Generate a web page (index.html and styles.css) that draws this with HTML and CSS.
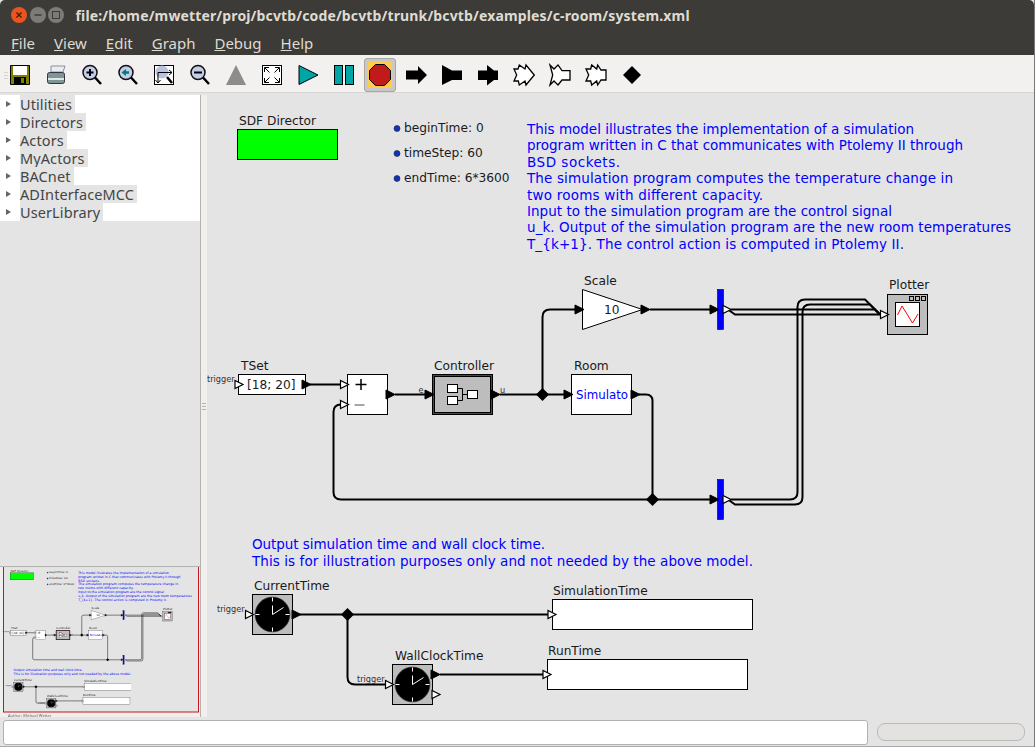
FILE: index.html
```html
<!DOCTYPE html>
<html>
<head>
  <title>system.xml</title>
  <link rel="stylesheet" href="styles.css">
</head>
<body>
<div class="window">

  <div class="titlebar">
    <span class="winbtn close"><svg width="16" height="16" viewBox="0 0 16 16"><path d="M5.5 5.5l5 5M10.5 5.5l-5 5" stroke="#4a1c0c" stroke-width="1.4"/></svg></span>
    <span class="winbtn"><svg width="16" height="16" viewBox="0 0 16 16"><path d="M4.5 8h7" stroke="#3c3b37" stroke-width="1.5"/></svg></span>
    <span class="winbtn"><svg width="16" height="16" viewBox="0 0 16 16"><rect x="4.5" y="4.5" width="7" height="7" fill="none" stroke="#3c3b37"/></svg></span>
    <span class="wintitle">file:/home/mwetter/proj/bcvtb/code/bcvtb/trunk/bcvtb/examples/c-room/system.xml</span>
  </div>

  <div class="menubar">
    <span><u>F</u>ile</span>
    <span><u>V</u>iew</span>
    <span><u>E</u>dit</span>
    <span><u>G</u>raph</span>
    <span><u>D</u>ebug</span>
    <span><u>H</u>elp</span>
  </div>

  <div class="toolbar">
    <span class="tool"><svg width="36" height="24" viewBox="0 0 36 24">
      <path d="M8.5 2.500h19v19h-19z" fill="#808000" stroke="#000"/>
      <rect x="11" y="3" width="14" height="9" fill="#fff"/>
      <rect x="12" y="14" width="12" height="7" fill="#000"/>
      <rect x="19" y="15" width="3" height="5" fill="#808000"/>
    </svg></span>
    <span class="tool"><svg width="36" height="24" viewBox="0 0 36 24">
      <path d="M13 3h14l-2 6H13z" fill="#e8eef0" stroke="#778" stroke-width=".8"/>
      <rect x="9.500" y="9.500" width="17" height="11" rx="2" fill="#7f9595" stroke="#334" stroke-width="1"/>
      <rect x="10" y="15" width="16" height="2" fill="#dfe8e8"/>
    </svg></span>
    <span class="tool"><svg width="36" height="24" viewBox="0 0 36 24">
      <use href="#lens"/><path d="M12.500 9.500h7M16 6v7" stroke="#000" stroke-width="2"/>
    </svg></span>
    <span class="tool"><svg width="36" height="24" viewBox="0 0 36 24">
      <use href="#lens"/><path d="M19 9.500h-4" stroke="#007a7a" stroke-width="2.500"/><path d="M11.500 9.500l4.500-3.500v7z" fill="#007a7a"/>
    </svg></span>
    <span class="tool"><svg width="36" height="24" viewBox="0 0 36 24">
      <rect x="8.500" y="2.500" width="19" height="19" fill="#fff" stroke="#000"/>
      <circle cx="16" cy="9" r="6.500" fill="#b9c3e0"/>
      <path d="M21 14l5 6" stroke="#000" stroke-width="2.500"/>
      <path d="M12 9.500h14M23 7l3 2.500-3 2.500M12 9.500v10M9.500 17l2.500 3 2.500-3" fill="none" stroke="#000"/>
    </svg></span>
    <span class="tool"><svg width="36" height="24" viewBox="0 0 36 24">
      <use href="#lens"/><path d="M12 9.500h8" stroke="#000" stroke-width="2"/>
    </svg></span>
    <span class="tool"><svg width="36" height="24" viewBox="0 0 36 24">
      <path d="M18 2l10 20H8z" fill="#8c8c8c"/>
    </svg></span>
    <span class="tool"><svg width="36" height="24" viewBox="0 0 36 24">
      <rect x="8.500" y="2.500" width="19" height="19" fill="#fff" stroke="#000"/>
      <path d="M11 5l4.500 4.500M25 5l-4.500 4.500M11 19l4.500-4.500M25 19l-4.500-4.500" stroke="#000"/>
      <path d="M10.500 9V4.500H15M21 4.500h4.500V9M10.500 15v4.500H15M21 19.500h4.500V15" fill="none" stroke="#000"/>
    </svg></span>
    <span class="tool"><svg width="36" height="24" viewBox="0 0 36 24">
      <path d="M9 2.500l19 9.500-19 9.500z" fill="#00a5a5" stroke="#000"/>
    </svg></span>
    <span class="tool"><svg width="36" height="24" viewBox="0 0 36 24">
      <rect x="8.500" y="2.500" width="8" height="19" fill="#00a5a5" stroke="#000"/>
      <rect x="19.500" y="2.500" width="8" height="19" fill="#00a5a5" stroke="#000"/>
    </svg></span>
    <span class="tool active"><svg width="24" height="26" viewBox="0 0 24 26">
      <rect width="24" height="26" fill="#ffcc4d"/>
      <path d="M7.500 2.500h9l6 6v9l-6 6h-9l-6-6v-9z" fill="#c01a1a" stroke="#000"/>
    </svg></span>
    <span class="tool"><svg width="36" height="24" viewBox="0 0 36 24">
      <path d="M8 7.500h12V3l9 9-9 9v-4.500H8z"/>
    </svg></span>
    <span class="tool"><svg width="36" height="24" viewBox="0 0 36 24">
      <path d="M8 2l10 5.500h10v9.500H18L8 22z"/>
    </svg></span>
    <span class="tool"><svg width="36" height="24" viewBox="0 0 36 24">
      <path d="M8 7.500h9V2l7 5.500h4v9.500h-4l-7 5.500V17H8z"/>
    </svg></span>
    <span class="tool"><svg width="36" height="24" viewBox="0 0 36 24">
      <polygon points="8,6 12,6 13.300,2 19,6 20,2 28.300,12 20,22 19,18 13.300,22 12.300,18 8,18 10.700,12" fill="#fff" stroke="#000" stroke-width="1.300"/>
    </svg></span>
    <span class="tool"><svg width="36" height="24" viewBox="0 0 36 24">
      <polygon points="8,2 12,6 16,2 20,7.700 28,7.700 28,17 20,17 16,22 12,18 8,22 10.700,12" fill="#fff" stroke="#000" stroke-width="1.300"/>
    </svg></span>
    <span class="tool"><svg width="36" height="24" viewBox="0 0 36 24">
      <polygon points="8,6 12.700,6 13.700,2 18.700,6 19.700,2 23,7 28,7 28,17 23,17 19.700,22 18.700,18 13.700,22 12.700,18 8,18 10.700,12" fill="#fff" stroke="#000" stroke-width="1.300"/>
    </svg></span>
    <span class="tool"><svg width="36" height="24" viewBox="0 0 36 24">
      <path d="M18 3l9 9-9 9-9-9z"/>
    </svg></span>
  </div>

  <div class="main">
    <div class="side">
      <ul class="tree">
        <li><span>Utilities</span></li>
        <li><span>Directors</span></li>
        <li><span>Actors</span></li>
        <li><span>MyActors</span></li>
        <li><span>BACnet</span></li>
        <li><span>ADInterfaceMCC</span></li>
        <li><span>UserLibrary</span></li>
      </ul>
      <div class="tree-rest"></div>
      <div class="preview">
        <svg width="200" height="150" viewBox="0 567 200 150">
          <rect x="3.500" y="560" width="195" height="152" fill="#e4e4e4"/>
          <g class="thumb"><use href="#diagram" transform="translate(-45.7 542.4) scale(.235)"/></g>
          <rect x="3.500" y="560" width="195" height="152" fill="none" stroke="#c8141e"/>
        </svg>
        <div class="author">Author: Michael Wetter</div>
      </div>
    </div>
    <div class="divider"><i></i></div>
    <svg class="canvas" width="826" height="622" viewBox="207 95 826 622">
      <defs>
        <g id="lens">
          <circle cx="16" cy="9.500" r="7" fill="#c3cce8" stroke="#111" stroke-width="1.500"/>
          <path d="M21 14.500l6 6.500" stroke="#000" stroke-width="2.500"/>
        </g>
        <polygon id="pb" points="0,-4.500 0,4.500 9,0" fill="#000" stroke="#000"/>
        <polygon id="pw" points="0,-4 0,4 8,0" fill="#fff" stroke="#000" stroke-width="1.200"/>
        <path id="dia" d="M0-6.500L6.500 0 0 6.500-6.500 0z" fill="#000"/>
        <g id="clock">
          <rect x="-20" y="-20" width="40" height="40" fill="#bdbdbd" stroke="#000"/>
          <circle r="17.500" fill="#000" stroke="#444" stroke-width=".6"/>
          <path d="M0-17v4M0 13v4M-17 0h4M13 0h4M0 0v-9M0 0l11-7" stroke="#fff" fill="none"/>
        </g>
      </defs>
      <g id="diagram">
        <rect x="207" y="95" width="826" height="622" fill="#e4e4e4"/>

        <!-- director and parameters -->
        <text class="lbl" x="239" y="125">SDF Director</text>
        <rect x="237.500" y="129.500" width="100" height="30" fill="#0f0" stroke="#000"/>
        <circle class="param" cx="397" cy="128.500" r="3"/>
        <text class="lbl" x="404" y="132">beginTime: 0</text>
        <circle class="param" cx="397" cy="153.500" r="3"/>
        <text class="lbl" x="404" y="157">timeStep: 60</text>
        <circle class="param" cx="397" cy="178.500" r="3"/>
        <text class="lbl" x="404" y="182">endTime: 6*3600</text>

        <!-- annotations -->
        <text class="note" x="527" y="134" textLength="387">This model illustrates the implementation of a simulation</text>
        <text class="note" x="527" y="150" textLength="436">program written in C that communicates with Ptolemy II through</text>
        <text class="note" x="527" y="167" textLength="93">BSD sockets.</text>
        <text class="note" x="527" y="183" textLength="426">The simulation program computes the temperature change in</text>
        <text class="note" x="527" y="200" textLength="236">two rooms with different capacity.</text>
        <text class="note" x="527" y="216" textLength="365">Input to the simulation program are the control signal</text>
        <text class="note" x="527" y="232" textLength="484">u_k. Output of the simulation program are the new room temperatures</text>
        <text class="note" x="527" y="249" textLength="377">T_{k+1}. The control action is computed in Ptolemy II.</text>
        <text class="note" x="252" y="549" textLength="293">Output simulation time and wall clock time.</text>
        <text class="note" x="252" y="566" textLength="501">This is for illustration purposes only and not needed by the above model.</text>

        <!-- wires -->
        <g class="wire">
          <path d="M310 384.500H341"/>
          <path d="M395 394.500H426"/>
          <path d="M500 394.500H565"/>
          <path d="M542.500 394.500V317q0-7.500 7.500-7.500H576"/>
          <path d="M650 309.500H711"/>
          <path d="M639 394.500H646q6.500 0 6.500 6.500V499.500"/>
          <path d="M652.500 499.500H341q-7.500 0-7.500-7.500V412q0-7.500 7.500-7.500"/>
          <path d="M652.500 499.500H711"/>
          <path d="M731 309.500H875L880 314.500"/>
          <path d="M728 309.500L735 314.500H880"/>
          <path d="M731 499.500H790q7.500 0 7.500-7.500V307q0-7.500 7.500-7.500H865L880 314.500"/>
          <path d="M728 499.500L735 504.500H795q7.500 0 7.500-7.500V312q0-7.500 7.500-7.500H870L880 314.500"/>
          <path d="M300 614.500H548"/>
          <path d="M347.500 614.500V677q0 7.500 7.500 7.500H386"/>
          <path d="M440 674.500H543"/>
        </g>

        <!-- TSet -->
        <text class="lbl" x="241" y="370">TSet</text>
        <rect class="box" x="238.500" y="374.500" width="67" height="20"/>
        <text class="lbl" x="247" y="389">[18; 20]</text>
        <text class="port" x="207" y="382">trigger</text>
        <use href="#pw" x="235" y="384.500"/>
        <use href="#pb" x="302" y="384.500"/>

        <!-- adder -->
        <rect class="box" x="347.500" y="374.500" width="40" height="40"/>
        <path d="M361 379v11M355.500 384.500h11" stroke="#000" stroke-width="1.500"/>
        <path d="M354.500 405h10" stroke="#888" stroke-width="1.500"/>
        <use href="#pw" x="340.500" y="384.500"/>
        <use href="#pw" x="340.500" y="404.500"/>
        <use href="#pb" x="386" y="394.500"/>

        <!-- controller -->
        <text class="lbl" x="434" y="370">Controller</text>
        <rect x="432" y="374" width="61" height="41" fill="#000"/>
        <rect x="433.500" y="375.500" width="58" height="38" fill="none" stroke="#d01010"/>
        <rect x="434.500" y="376.500" width="56" height="36" fill="#bdbdbd" stroke="#000"/>
        <path d="M457.500 388.500h5v12h-5M462.500 394.500h5" fill="none" stroke="#000"/>
        <rect class="box" x="447.500" y="384.500" width="10" height="8"/>
        <rect class="box" x="447.500" y="396.500" width="10" height="8"/>
        <rect class="box" x="467.500" y="390.500" width="10" height="8"/>
        <text class="port" x="418.500" y="393">e</text>
        <text class="port" x="500" y="393">u</text>
        <use href="#pb" x="425" y="394.500"/>
        <use href="#pb" x="491" y="394.500"/>
        <use href="#dia" x="542.500" y="394.500"/>

        <!-- scale -->
        <text class="lbl" x="584" y="285">Scale</text>
        <path class="box" d="M582.500 289.500l60 20-60 20z"/>
        <text class="lbl" x="604" y="314">10</text>
        <use href="#pb" x="575" y="309.500"/>
        <use href="#pb" x="641" y="309.500"/>

        <!-- room -->
        <text class="lbl" x="574" y="370">Room</text>
        <rect class="box" x="571.500" y="374.500" width="60" height="40"/>
        <text class="lbl sim" x="576" y="399">Simulato</text>
        <use href="#pb" x="564" y="394.500"/>
        <use href="#pb" x="631" y="394.500"/>
        <use href="#dia" x="652.500" y="499.500"/>

        <!-- sample delay bars -->
        <rect x="717.500" y="289.500" width="6" height="40" fill="#00f" stroke="#000" stroke-width=".6"/>
        <use href="#pb" x="710" y="309.500"/>
        <use href="#pw" x="723" y="309.500"/>
        <rect x="717.500" y="479.500" width="6" height="40" fill="#00f" stroke="#000" stroke-width=".6"/>
        <use href="#pb" x="710" y="499.500"/>
        <use href="#pw" x="723" y="499.500"/>

        <!-- plotter -->
        <text class="lbl" x="889" y="289">Plotter</text>
        <rect x="887.500" y="294.500" width="40" height="40" fill="#bdbdbd" stroke="#000"/>
        <rect class="box" x="895.500" y="302.500" width="24" height="24"/>
        <rect x="909.500" y="296.500" width="4" height="4" fill="none" stroke="#000"/>
        <rect x="915.500" y="296.500" width="4" height="4" fill="none" stroke="#000"/>
        <rect x="921.500" y="296.500" width="4" height="4" fill="none" stroke="#000"/>
        <path d="M897.500 315L902 306l10.500 17 5.500-9" fill="none" stroke="#f00"/>
        <use href="#pw" x="880.500" y="314.500"/>

        <!-- current time -->
        <text class="lbl" x="254" y="590">CurrentTime</text>
        <use href="#clock" x="272.500" y="614.500"/>
        <text class="port" x="217" y="612">trigger</text>
        <use href="#pw" x="245.500" y="614.500"/>
        <use href="#pb" x="292" y="614.500"/>
        <use href="#dia" x="347.500" y="614.500"/>

        <!-- wall clock time -->
        <text class="lbl" x="395" y="660">WallClockTime</text>
        <use href="#clock" x="412.500" y="684.500"/>
        <text class="port" x="357" y="682">trigger</text>
        <use href="#pw" x="385.500" y="684.500"/>
        <use href="#pb" x="431" y="674.500"/>
        <use href="#pw" x="432" y="694.500"/>

        <!-- displays -->
        <text class="lbl" x="553" y="595">SimulationTime</text>
        <rect class="box" x="552.500" y="599.500" width="200" height="30"/>
        <use href="#pw" x="548" y="614.500"/>
        <text class="lbl" x="548" y="655">RunTime</text>
        <rect class="box" x="547.500" y="659.500" width="200" height="30"/>
        <use href="#pw" x="543" y="674.500"/>
      </g>
    </svg>
  </div>

  <div class="statusbar">
    <div class="status-input"></div>
    <div class="progress"></div>
  </div>

</div>
</body>
</html>
```
FILE: styles.css
```css
html, body {
  margin: 0;
  padding: 0;
}

body {
  background: #e4e4e4;
  font-family: "Noto Sans", "Open Sans", sans-serif;
}

.window {
  width: 1035px;
  height: 747px;
  display: flex;
  flex-direction: column;
  overflow: hidden;
  box-sizing: border-box;
  background: #e4e4e4;
  border-right: 1px solid #777;
}

/* title bar + menu */
.titlebar {
  height: 30px;
  flex: none;
  display: flex;
  align-items: center;
  padding-left: 11px;
  background: #3c3b37;
  border-radius: 5px 5px 0 0;
  box-sizing: border-box;
}

.winbtn {
  width: 16px;
  height: 16px;
  margin-right: 2.500px;
  border-radius: 50%;
  background: #7d7b76;
  display: block;
}

.winbtn svg {
  display: block;
}

.winbtn.close {
  background: #e9541f;
}

.wintitle {
  margin-left: 9px;
  font-size: 14px;
  font-weight: 700;
  letter-spacing: .14px;
  color: #dfdbd2;
}

.menubar {
  height: 25px;
  flex: none;
  display: flex;
  align-items: center;
  gap: 19px;
  padding-left: 11px;
  font-size: 15px;
  color: #dfdbd2;
  background: #3c3b37;
}

/* toolbar */
.toolbar {
  height: 38px;
  flex: none;
  display: flex;
  align-items: flex-start;
  padding: 8px 0 0 2px;
  box-sizing: border-box;
  background-color: #f2f1f0;
  background-image: repeating-linear-gradient(#d6d4d1 0 1px, transparent 1px 3px);
  background-size: 4px 7px;
  background-position: 4px 17px;
  background-repeat: no-repeat;
  border-bottom: 1px solid #d8d6d4;
}

.tool {
  width: 36px;
  height: 24px;
  flex: none;
  display: block;
}

.tool svg {
  display: block;
}

.tool.active {
  width: 32px;
  height: 34px;
  margin: -5px 2px 0;
  box-sizing: border-box;
  padding: 3px;
  border: 1px solid #a8a6a2;
  border-radius: 3px;
  background: #c9c8c6;
}

/* main area */
.main {
  flex: 1;
  min-height: 0;
  display: flex;
  padding: 2px 0 0;
}

.side {
  width: 201px;
  flex: none;
  display: flex;
  flex-direction: column;
  border-right: 1px solid #b4b2ae;
  box-sizing: border-box;
}

.tree {
  list-style: none;
  margin: 0;
  padding: 0;
  background: #fff;
  height: 126px;
  flex: none;
  font-size: 14.500px;
  letter-spacing: .1px;
  color: #444;
}

.tree li {
  height: 18px;
  line-height: 19px;
  padding-left: 20px;
  position: relative;
}

.tree li::before {
  content: "";
  position: absolute;
  left: 6px;
  top: 6px;
  border-left: 5px solid #666;
  border-top: 3.500px solid transparent;
  border-bottom: 3.500px solid transparent;
}

.tree li span {
  display: inline-block;
  height: 18px;
  padding-right: 3px;
  background: #e4e4e4;
  vertical-align: top;
}

.tree-rest {
  flex: 1;
  border-bottom: 1px solid #b4b2ae;
}

.preview {
  height: 150px;
  flex: none;
  position: relative;
  background: #f0efee;
}

.preview svg {
  display: block;
}

.thumb {
  filter: blur(.6px);
}

.author {
  position: absolute;
  left: 8px;
  top: 146px;
  font-size: 4px;
  color: #666;
}

.divider {
  width: 6px;
  flex: none;
  background: #f0efee;
  display: flex;
  align-items: center;
  justify-content: center;
}

.divider i {
  display: block;
  width: 4px;
  height: 7px;
  background: repeating-linear-gradient(#b8b6b2 0 1px, transparent 1px 3px);
}

.canvas {
  flex: none;
  display: block;
}

.canvas text {
  font-family: "DejaVu Sans", sans-serif;
}

.lbl {
  font-size: 12.200px;
  fill: #1a1a1a;
}

.lbl.sim {
  font-size: 11.800px;
  fill: #0000ff;
}

.note {
  font-size: 13.500px;
  fill: #0000ff;
}

.port {
  font-size: 8.200px;
  fill: #333;
}

.param {
  fill: #1133bb;
  stroke: #223;
  stroke-width: .6;
}

.box {
  fill: #fff;
  stroke: #000;
}

.wire path {
  fill: none;
  stroke: #000;
  stroke-width: 2;
}

/* bottom bar */
.statusbar {
  height: 30px;
  flex: none;
  display: flex;
  align-items: flex-start;
  padding: 3px 9px 0 3px;
  box-sizing: border-box;
  gap: 9px;
  border-bottom: 1px solid #aaa;
}

.status-input {
  width: 865px;
  height: 25px;
  flex: none;
  box-sizing: border-box;
  background: #fff;
  border: 1px solid #b4b2ae;
  border-radius: 3px;
}

.progress {
  width: 148px;
  height: 18px;
  flex: none;
  margin-top: 3px;
  box-sizing: border-box;
  background: #e4e2e0;
  border: 1px solid #bcbab6;
  border-radius: 8px;
}
```
